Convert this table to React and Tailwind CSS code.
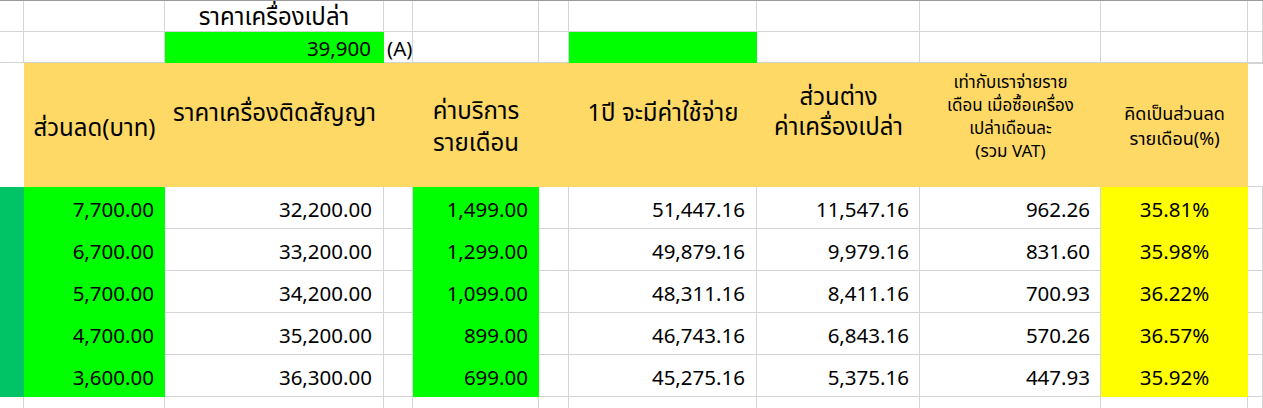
import React from "react";

const rows = [
  ["7,700.00", "32,200.00", "1,499.00", "51,447.16", "11,547.16", "962.26", "35.81%"],
  ["6,700.00", "33,200.00", "1,299.00", "49,879.16", "9,979.16", "831.60", "35.98%"],
  ["5,700.00", "34,200.00", "1,099.00", "48,311.16", "8,411.16", "700.93", "36.22%"],
  ["4,700.00", "35,200.00", "899.00", "46,743.16", "6,843.16", "570.26", "36.57%"],
  ["3,600.00", "36,300.00", "699.00", "45,275.16", "5,375.16", "447.93", "35.92%"],
];

const g = "border-r border-b border-[#d4d4d4]";

function TopRow() {
  return (
    <div className="flex h-[31px]">
      <div className={`w-[24px] ${g}`} />
      <div className={`w-[141px] ${g}`} />
      <div className={`w-[219px] ${g} flex items-center justify-center text-[24px] leading-[30px]`}>ราคาเครื่องเปล่า</div>
      <div className={`w-[29px] ${g}`} />
      <div className={`w-[126px] ${g}`} />
      <div className={`w-[30px] ${g}`} />
      <div className={`w-[188px] ${g}`} />
      <div className={`w-[163px] ${g}`} />
      <div className={`w-[181px] ${g}`} />
      <div className={`w-[147px] ${g}`} />
      <div className={`w-[15px] ${g}`} />
    </div>
  );
}

function SecondRow() {
  return (
    <div className="flex h-[31px]">
      <div className={`w-[24px] ${g}`} />
      <div className={`w-[141px] ${g}`} />
      <div className="w-[219px] bg-[#00ff00] flex items-center justify-end pr-[13px] text-[20.5px] pt-[2px]">39,900</div>
      <div className={`w-[29px] ${g} flex items-center pl-[3px] text-[20.5px] pt-[2px]`}>(A)</div>
      <div className={`w-[126px] ${g}`} />
      <div className={`w-[30px] ${g}`} />
      <div className="w-[188px] bg-[#00ff00]" />
      <div className={`w-[163px] ${g}`} />
      <div className={`w-[181px] ${g}`} />
      <div className={`w-[147px] ${g}`} />
      <div className={`w-[15px] ${g}`} />
    </div>
  );
}

function HeaderRow() {
  return (
    <div className="flex h-[124px]">
      <div className="w-[24px]" />
      <div className="w-[1224px] bg-[#ffd966] flex text-center">
        <div className="w-[141px] flex flex-col justify-center items-center text-[24px] leading-[30px] pt-[4px]">ส่วนลด(บาท)</div>
        <div className="w-[219px] flex flex-col justify-center items-center text-[24px] leading-[30px] pb-[26px]">ราคาเครื่องติดสัญญา</div>
        <div className="w-[29px]" />
        <div className="w-[126px] flex flex-col justify-center items-center text-[24px] leading-[32px] pt-[2px]">
          <span>ค่าบริการ</span>
          <span>รายเดือน</span>
        </div>
        <div className="w-[30px]" />
        <div className="w-[188px] flex flex-col justify-center items-center text-[24px] leading-[30px] pb-[26px]">1ปี จะมีค่าใช้จ่าย</div>
        <div className="w-[163px] flex flex-col justify-center items-center text-[24px] leading-[30px] pb-[28px]">
          <span>ส่วนต่าง</span>
          <span>ค่าเครื่องเปล่า</span>
        </div>
        <div className="w-[181px] flex flex-col justify-center items-center text-[17px] leading-[23px] pb-[18px]">
          <span>เท่ากับเราจ่ายราย</span>
          <span>เดือน เมื่อซื้อเครื่อง</span>
          <span>เปล่าเดือนละ</span>
          <span>(รวม VAT)</span>
        </div>
        <div className="w-[147px] flex flex-col justify-center items-center text-[18px] leading-[25px] pt-[2px]">
          <span>คิดเป็นส่วนลด</span>
          <span>รายเดือน(%)</span>
        </div>
      </div>
      <div className="w-[15px] border-t border-b border-[#d4d4d4]" />
    </div>
  );
}

function DataRow({ r }) {
  return (
    <div className="flex h-[42px] text-[20.5px]">
      <div className="w-[24px] bg-[#00c466]" />
      <div className="w-[141px] bg-[#00ff00] flex items-center justify-end pr-[11px] pt-[3px]">{r[0]}</div>
      <div className={`w-[219px] ${g} flex items-center justify-end pr-[11px] pt-[3px]`}>{r[1]}</div>
      <div className={`w-[29px] ${g}`} />
      <div className="w-[126px] bg-[#00ff00] flex items-center justify-end pr-[11px] pt-[3px]">{r[2]}</div>
      <div className={`w-[30px] ${g}`} />
      <div className={`w-[188px] ${g} flex items-center justify-end pr-[11px] pt-[3px]`}>{r[3]}</div>
      <div className={`w-[163px] ${g} flex items-center justify-end pr-[10px] pt-[3px]`}>{r[4]}</div>
      <div className={`w-[181px] ${g} flex items-center justify-end pr-[10px] pt-[3px]`}>{r[5]}</div>
      <div className="w-[147px] bg-[#ffff00] flex items-center justify-center pt-[3px]">{r[6]}</div>
      <div className={`w-[15px] ${g}`} />
    </div>
  );
}

function LastRow() {
  return (
    <div className="flex h-[11px]">
      <div className="w-[24px] border-r border-[#d4d4d4]" />
      <div className="w-[141px] border-r border-[#d4d4d4]" />
      <div className="w-[219px] border-r border-[#d4d4d4]" />
      <div className="w-[29px] border-r border-[#d4d4d4]" />
      <div className="w-[126px] border-r border-[#d4d4d4]" />
      <div className="w-[30px] border-r border-[#d4d4d4]" />
      <div className="w-[188px] border-r border-[#d4d4d4]" />
      <div className="w-[163px] border-r border-[#d4d4d4]" />
      <div className="w-[181px] border-r border-[#d4d4d4]" />
      <div className="w-[147px] border-r border-[#d4d4d4]" />
      <div className="w-[15px] border-r border-[#d4d4d4]" />
    </div>
  );
}

export default function App() {
  return (
    <div className="w-[1263px] h-[408px] overflow-hidden bg-white text-black border-t border-[#9b9b9b] font-['Noto_Sans','Noto_Sans_Thai','Tahoma',sans-serif] whitespace-nowrap">
      <TopRow />
      <SecondRow />
      <HeaderRow />
      {rows.map((r, i) => (
        <DataRow key={i} r={r} />
      ))}
      <LastRow />
    </div>
  );
}
